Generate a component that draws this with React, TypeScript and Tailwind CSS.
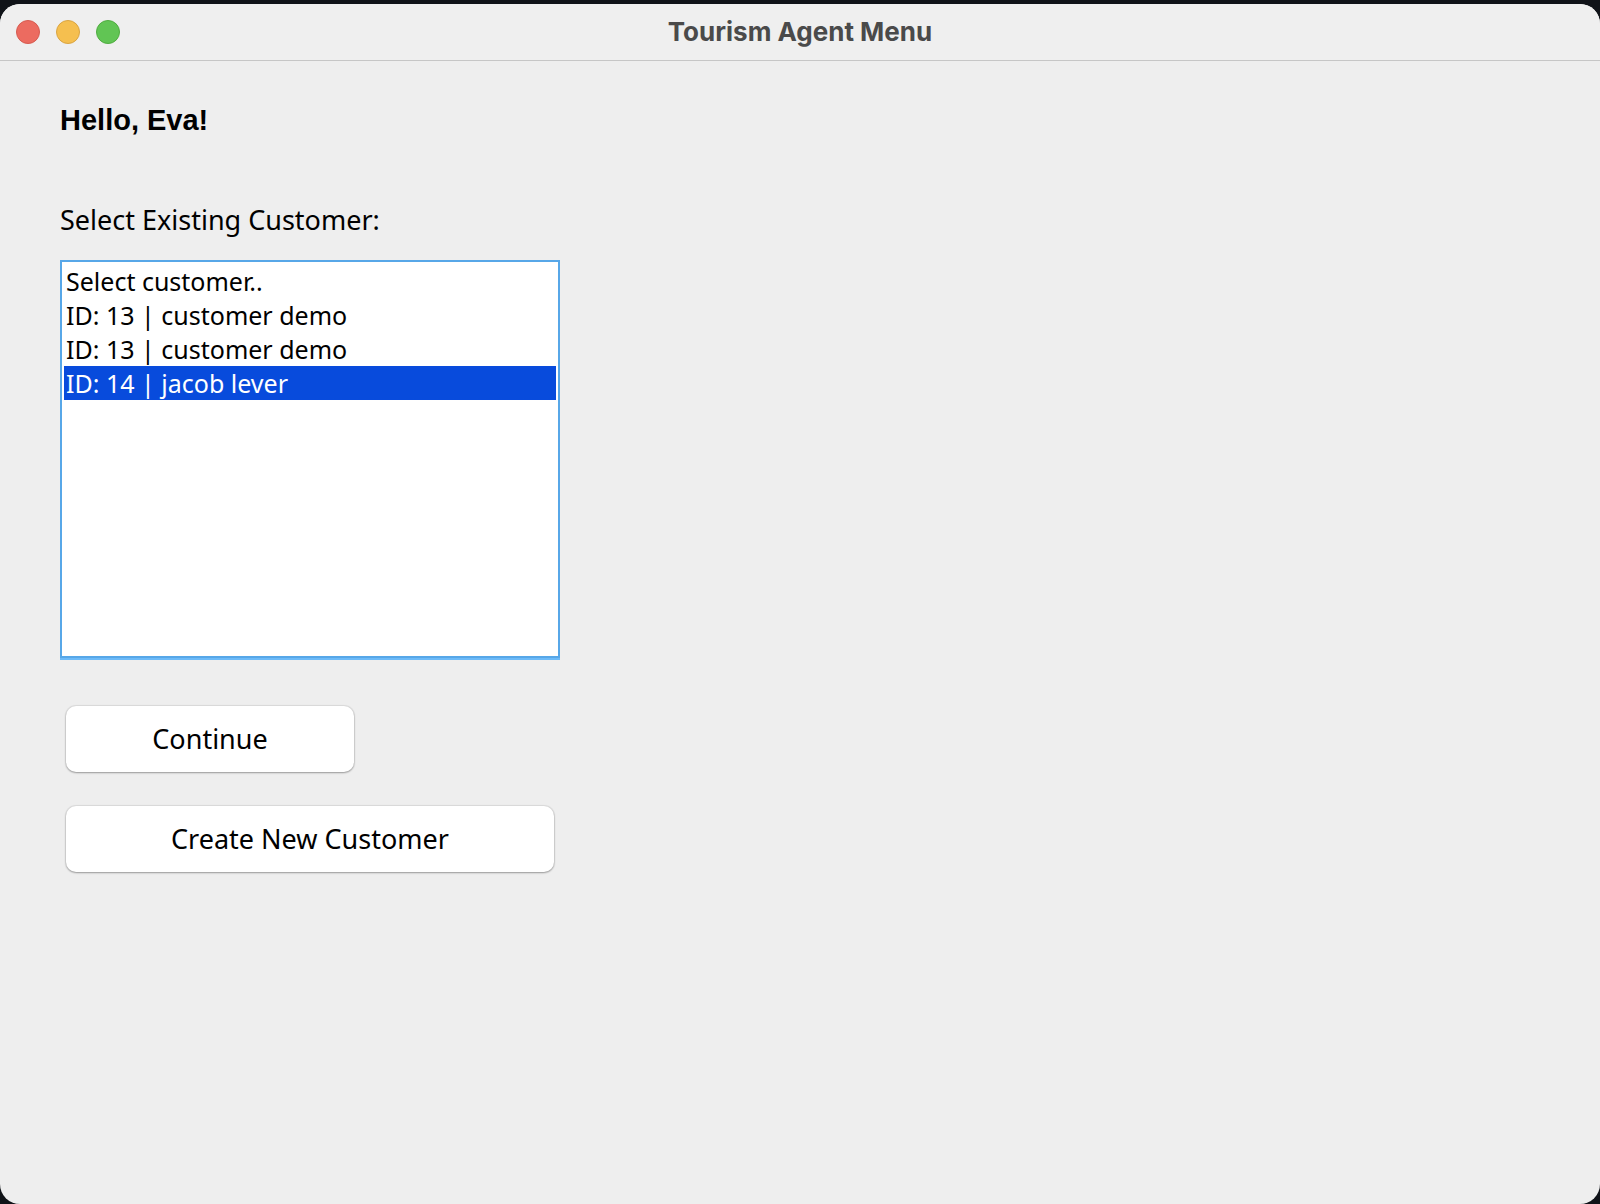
import { useState } from "react";

const customers = [
  "Select customer..",
  "ID: 13 | customer demo",
  "ID: 13 | customer demo",
  "ID: 14 | jacob lever",
];

function TitleBar() {
  return (
    <header className="grid h-[57px] grid-cols-[1fr_auto_1fr] items-center border-b border-[#c6c6c6] bg-[#efefef] px-4">
      <div className="flex gap-4">
        <button type="button" aria-label="Close" className="size-6 rounded-full border border-[#d65b50] bg-[#ec6b60]" />
        <button type="button" aria-label="Minimize" className="size-6 rounded-full border border-[#d9a442] bg-[#f5bf4f]" />
        <button type="button" aria-label="Zoom" className="size-6 rounded-full border border-[#50ac40] bg-[#61c554]" />
      </div>
      <div className="font-['Inter',sans-serif] text-[26px] leading-8 font-bold text-[#4a4a4a]">Tourism Agent Menu</div>
    </header>
  );
}

function PushButton({ label, width }: { label: string; width: string }) {
  return (
    <button
      type="button"
      className={`h-[66px] rounded-[10px] bg-white text-[27px] leading-8 text-black shadow-[0_0_1px_1px_rgba(0,0,0,0.08),0_1px_2px_rgba(0,0,0,0.3)] ${width}`}
    >
      {label}
    </button>
  );
}

export default function App() {
  const [selected, setSelected] = useState("3");

  return (
    <div className="flex min-h-screen flex-col bg-[#101318] pt-1 font-['Noto_Sans',sans-serif] text-black">
      <div className="flex grow flex-col overflow-hidden rounded-[20px] bg-[#eeeeee]">
        <TitleBar />
        <main className="flex flex-col items-start px-[60px] pt-[39px]">
          <h1 className="font-['Liberation_Sans',sans-serif] text-[29px] leading-10 font-bold">Hello, Eva!</h1>
          <label htmlFor="customer" className="mt-[60px] text-[27px] leading-10">
            Select Existing Customer:
          </label>
          <select
            id="customer"
            size={11}
            value={selected}
            onChange={(event) => setSelected(event.target.value)}
            className="mt-5 h-[398px] w-full max-w-[500px] overflow-hidden border-2 border-[#57a7e8] bg-white p-[2px] text-[25px] shadow-[0_2px_0_#6cbaf8] outline-none"
          >
            {customers.map((name, index) => (
              <option
                key={index}
                value={String(index)}
                className="h-[34px] p-0 px-[2px] leading-[34px] checked:bg-linear-to-r checked:from-[#084bdc] checked:to-[#084bdc] checked:[-webkit-text-fill-color:white]"
              >
                {name}
              </option>
            ))}
          </select>
          <div className="mt-12 flex w-full flex-col gap-[34px] px-[6px]">
            <PushButton label="Continue" width="w-[288px]" />
            <PushButton label="Create New Customer" width="w-full max-w-[488px]" />
          </div>
        </main>
      </div>
    </div>
  );
}
